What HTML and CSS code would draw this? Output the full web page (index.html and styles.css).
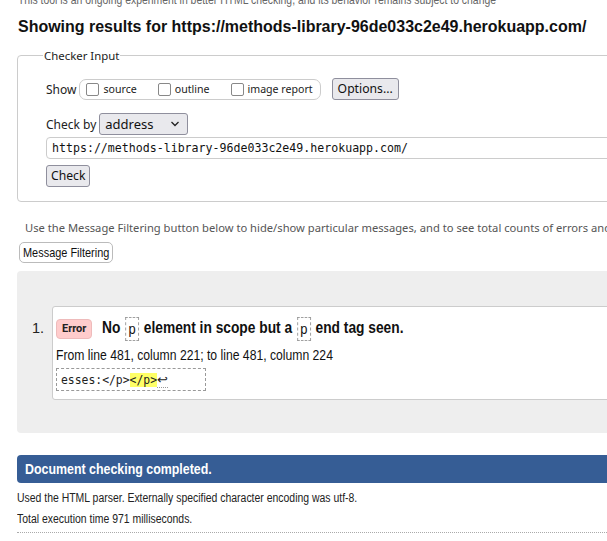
FILE: index.html
```html
<!DOCTYPE html>
<html>
<head>
<meta charset="utf-8">
<link rel="stylesheet" href="styles.css">
</head>
<body>
<div class="page">
  <p class="intro narrow">This tool is an ongoing experiment in better HTML checking, and its behavior remains subject to change</p>
  <h2 class="title narrow">Showing results for https://methods-library-96de033c2e49.herokuapp.com/</h2>
  <fieldset class="checker">
    <legend class="legend">Checker Input</legend>
    <div class="row show-row">
      <span class="lbl">Show</span>
      <span class="group">
        <label class="opt"><input type="checkbox" class="cb"><span>source</span></label>
        <label class="opt"><input type="checkbox" class="cb"><span>outline</span></label>
        <label class="opt"><input type="checkbox" class="cb"><span>image report</span></label>
      </span>
      <button class="btn btn-options">Options...</button>
    </div>
    <div class="row by-row">
      <span class="lbl">Check by</span>
      <span class="select"><span>address</span><svg class="chev" width="10" height="6" viewBox="0 0 10 6"><path d="M1.5 1 L5 4.5 L8.5 1" fill="none" stroke="#222" stroke-width="1.3"/></svg></span>
    </div>
    <div class="url">https://methods-library-96de033c2e49.herokuapp.com/</div>
    <button class="btn btn-check">Check</button>
  </fieldset>
  <p class="hint">Use the Message Filtering button below to hide/show particular messages, and to see total counts of errors and warnings.</p>
  <button class="filter"><span class="filter-text">Message Filtering</span></button>
  <div class="results">
    <ol class="msgs">
      <li class="item">
        <span class="num">1.</span>
        <div class="msg">
          <p class="msg-head"><span class="badge">Error</span><span class="msg-text">No <code class="tag">p</code> element in scope but a <code class="tag">p</code> end tag seen.</span></p>
          <p class="loc narrow">From line 481, column 221; to line 481, column 224</p>
          <p class="extract"><code>esses:&lt;/p&gt;<b class="hl">&lt;/p&gt;</b><span class="lf">↩</span></code></p>
        </div>
      </li>
    </ol>
  </div>
  <p class="done"><span class="done-text">Document checking completed.</span></p>
  <p class="info narrow">Used the HTML parser. Externally specified character encoding was utf-8.</p>
  <p class="info narrow">Total execution time 971 milliseconds.</p>
  <div class="rule"></div>
</div>
</body>
</html>
```
FILE: styles.css
```css
html, body {
  margin: 0;
  padding: 0;
  overflow: hidden;
  background: #fff;
}
.page {
  width: 760px;
  padding-left: 17px;
  margin-top: -8px;
  font-family: "Liberation Sans", Arial, sans-serif;
  color: #111;
}
.narrow {
  transform-origin: 0 50%;
  white-space: nowrap;
}
.intro {
  margin: 0 0 0 1px;
  font-size: 12.2px;
  line-height: 17px;
  color: #666;
  transform: scaleX(0.855);
}
.title {
  margin: 7px 0 0 1px;
  font-size: 17px;
  line-height: 22px;
  font-weight: bold;
  color: #111;
  transform: scaleX(0.94);
}
.checker {
  margin: 10px 0 0 0;
  padding: 4px 0 14px 28px;
  border: 1px solid #ccc;
  border-radius: 4px;
  font-family: "Noto Sans", sans-serif;
  font-size: 12px;
  color: #222;
}
.legend {
  padding: 0 1px;
  margin-left: -3px;
  font-size: 11.4px;
  color: #222;
}
.row {
  display: flex;
  align-items: center;
}
.show-row {
  margin-top: 10px;
  height: 24px;
}
.lbl {
  margin-right: 3px;
}
.group {
  display: flex;
  align-items: center;
  height: 19px;
  border: 1px solid #ccc;
  border-radius: 7px;
  padding: 0 7px 0 6px;
  gap: 21px;
}
.opt {
  display: flex;
  align-items: center;
  font-size: 10.6px;
}
.cb {
  appearance: none;
  -webkit-appearance: none;
  width: 13px;
  height: 13px;
  margin: 0 4px 0 0;
  border: 1.5px solid #888;
  border-radius: 2px;
  background: #fff;
  box-sizing: border-box;
}
.btn {
  font-family: "Noto Sans", sans-serif;
  font-size: 12.2px;
  color: #111;
  background: #e9e9ed;
  border: 1px solid #8f8f9d;
  border-radius: 3px;
  padding: 0 5px;
  height: 22px;
  line-height: 20px;
}
.btn-options {
  margin-left: 11px;
}
.by-row {
  margin-top: 12px;
}
.select {
  display: flex;
  align-items: center;
  justify-content: space-between;
  box-sizing: border-box;
  width: 89px;
  height: 22px;
  padding: 0 7px 0 5px;
  background: #e9e9ed;
  border: 1px solid #8f8f9d;
  border-radius: 3px;
  font-size: 13px;
  color: #111;
}
.url {
  margin-top: 2px;
  height: 20px;
  line-height: 20px;
  border: 1px solid #ccc;
  border-radius: 4px;
  padding-left: 5px;
  font-family: "DejaVu Sans Mono", monospace;
  font-size: 11.6px;
  color: #111;
}
.btn-check {
  margin-top: 6px;
  padding: 0 4px;
}
.hint {
  margin: 18px 0 0 8px;
  font-family: "Noto Sans", sans-serif;
  font-size: 11.2px;
  line-height: 16px;
  color: #555;
  white-space: nowrap;
}
.filter {
  margin: 6px 0 0 2px;
  box-sizing: border-box;
  width: 94px;
  height: 21px;
  padding: 0 0 0 3px;
  text-align: left;
  white-space: nowrap;
  background: #fff;
  border: 1px solid #bbb;
  border-radius: 5px;
  overflow: visible;
}
.filter-text {
  display: inline-block;
  font-family: "Liberation Sans", Arial, sans-serif;
  font-size: 13.5px;
  color: #111;
  transform: scaleX(0.81);
  transform-origin: 0 50%;
}
.results {
  margin-top: 8px;
  background: #eee;
  border-radius: 4px;
  padding: 35px 0 33px 0;
}
.msgs {
  margin: 0;
  padding: 0 0 0 15px;
  list-style: none;
}
.item {
  display: flex;
  align-items: flex-start;
}
.num {
  width: 20px;
  padding-top: 14px;
  font-size: 14.5px;
  line-height: 17px;
  color: #222;
}
.msg {
  flex: 1;
  background: #fff;
  border: 1px solid #ccc;
  border-radius: 3px;
  padding: 10px 0 8px 3px;
}
.msg-head {
  margin: 0;
  display: flex;
  align-items: center;
  white-space: nowrap;
}
.badge {
  font-family: Roboto, sans-serif;
  font-size: 11px;
  font-weight: bold;
  color: #222;
  background: #fcc;
  border: 1px solid #ebb;
  border-radius: 4px;
  padding: 0 5px;
  height: 18px;
  line-height: 18px;
  margin-right: 10px;
}
.msg-text {
  display: inline-block;
  font-size: 16px;
  font-weight: bold;
  color: #111;
  transform: scaleX(0.86);
  transform-origin: 0 50%;
}
.tag {
  display: inline-block;
  font-family: "Liberation Sans", Arial, sans-serif;
  font-weight: normal;
  font-size: 15px;
  border: 1px dashed #999;
  padding: 3px 3px;
  line-height: 16px;
  vertical-align: middle;
  margin: 0 1px;
}
.loc {
  margin: 6px 0 0 0;
  font-size: 14px;
  line-height: 17px;
  color: #111;
  transform: scaleX(0.87);
}
.extract {
  margin: 4px 0 0 0;
}
.extract code {
  display: inline-block;
  box-sizing: border-box;
  width: 150px;
  height: 23px;
  border: 1px dashed #999;
  padding: 2px 4px 0 4px;
  font-family: "DejaVu Sans Mono", monospace;
  font-size: 11.4px;
  line-height: 17px;
  color: #222;
}
.hl {
  font-weight: normal;
  background: #ff6;
}
.lf {
  font-family: "DejaVu Sans", sans-serif;
  font-size: 13px;
  border-bottom: 1px dotted #999;
}
.done {
  margin: 22px 0 0 0;
  background: #365d95;
  color: #fff;
  line-height: 27px;
  padding-left: 8px;
  border-radius: 4px;
  white-space: nowrap;
}
.done-text {
  display: inline-block;
  font-weight: bold;
  font-size: 14.5px;
  transform: scaleX(0.855);
  transform-origin: 0 50%;
}
.info {
  margin: 8px 0 0 0;
  font-size: 12px;
  line-height: 15px;
  color: #222;
  transform: scaleX(0.87);
}
.info + .info {
  margin-top: 6px;
}
.rule {
  margin-top: 5px;
  border-top: 1px dotted #aaa;
}
```
